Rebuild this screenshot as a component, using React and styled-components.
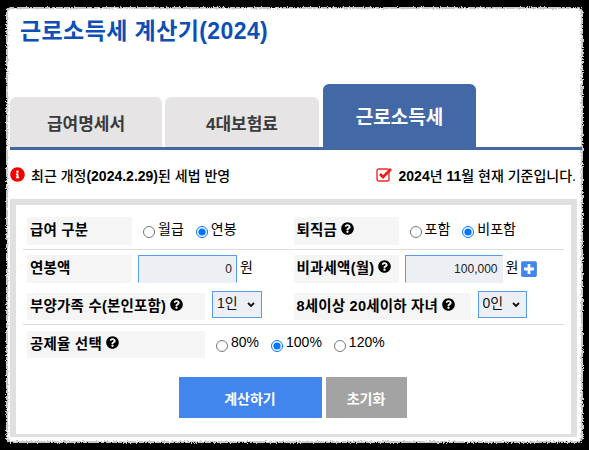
import styled, { createGlobalStyle } from 'styled-components'
import { FaQuestionCircle, FaInfoCircle, FaPlusSquare } from 'react-icons/fa'

const GlobalStyle = createGlobalStyle`
  html, body { margin: 0; padding: 0; background: #000; }
  body {
    width: 589px;
    height: 450px;
    overflow: hidden;
    font-family: "Liberation Sans", "Noto Sans CJK KR", sans-serif;
    color: #000;
  }
`

const Frame = styled.div`
  position: relative;
  width: 589px;
  height: 450px;
  padding: 8px 7px 0 10px;
  box-sizing: border-box;
  isolation: isolate;

  &::before {
    content: '';
    position: absolute;
    z-index: -1;
    left: 6px;
    top: 7px;
    width: 577px;
    height: 436px;
    background: #fff;
    border-radius: 6px;
    box-shadow: inset 0 0 0 2px #c9c9c9;
    filter: url(#rough);
  }
`

const Title = styled.h1`
  margin: 0;
  height: 76px;
  padding: 10px 0 0 10px;
  box-sizing: border-box;
  font-size: 23px;
  line-height: 26px;
  letter-spacing: 0.4px;
  font-weight: 700;
  color: #0d4fb4;
`

const TabBar = styled.div`
  display: flex;
  align-items: flex-end;
  gap: 3px;
  height: 63px;
  border-bottom: 3px solid #44699f;
`

const Tab = styled.div`
  width: ${p => p.$w}px;
  height: ${p => (p.$active ? 63 : 50)}px;
  margin-left: ${p => (p.$active ? 1 : 0)}px;
  padding-bottom: ${p => (p.$active ? 1 : 0)}px;
  box-sizing: border-box;
  display: flex;
  align-items: center;
  justify-content: center;
  border-radius: 6px 6px 0 0;
  background: ${p => (p.$active ? '#4269a6' : '#e6e4e5')};
  color: ${p => (p.$active ? '#fff' : '#3a3a3a')};
  font-size: ${p => (p.$active ? 19 : 17)}px;
  font-weight: 700;
`

const Notice = styled.div`
  display: flex;
  align-items: center;
  justify-content: space-between;
  height: 49px;
  padding-right: 6px;
  font-size: 14px;
`

const NoticeText = styled.span`
  display: flex;
  align-items: center;
  gap: 6px;
  font-weight: 500;

  b { font-weight: 700; }
`

const Panel = styled.div`
  width: 567px;
  height: 238px;
  box-sizing: border-box;
  padding: 6px 6px 3px 6px;
  background: #e0e0e0;
`

const Form = styled.div`
  height: 100%;
  box-sizing: border-box;
  padding: 12px 7px 0 7px;
  background: #fff;
`

const Row = styled.div`
  display: flex;
  box-sizing: border-box;
  height: ${p => p.$h || 28}px;
  padding: 0 4px;
  margin-bottom: ${p => p.$mb || 0}px;
  border-bottom: ${p => (p.$line ? '1px solid #dcdcdc' : 'none')};
  padding-bottom: ${p => (p.$line ? 4 : 0)}px;
`

const Field = styled.div`
  display: flex;
  align-items: center;
  width: 267px;
  gap: ${p => p.$gap || 6}px;
`

const Label = styled.div`
  display: flex;
  align-items: center;
  gap: 3px;
  align-self: stretch;
  width: ${p => p.$w}px;
  flex: none;
  box-sizing: border-box;
  padding: 0 0 5px 3px;
  background: #f5f5f5;
  font-size: 14.5px;
  font-weight: 700;
  letter-spacing: 0.2px;
  white-space: nowrap;
`

const Help = styled(FaQuestionCircle)`
  width: 13px;
  height: 13px;
  color: #000;
  margin-left: 1px;
  flex: none;
`

const Radios = styled.div`
  display: flex;
  align-items: center;
  margin-left: ${p => p.$ml || 5}px;
  gap: ${p => p.$gap || 12}px;
`

const RadioLabel = styled.label`
  display: flex;
  align-items: center;
  gap: 3px;
  padding-bottom: 6px;
  font-size: 14px;
`

const RadioInput = styled.input`
  width: 12px;
  height: 12px;
  margin: 8px 0 0;
`

const MoneyInput = styled.input`
  width: ${p => p.$w}px;
  height: 28px;
  flex: none;
  box-sizing: border-box;
  padding: 0 4px 0 0;
  border: 1px solid #5a9aee;
  border-right-color: ${p => (p.$soft ? '#eceff4' : '#5a9aee')};
  border-bottom-color: #eceff4;
  background: #eceff4;
  text-align: right;
  font: 12px "Liberation Sans", "Noto Sans CJK KR", sans-serif;
  color: #222;
  outline: none;
`

const Unit = styled.span`
  margin-left: -3px;
  padding-bottom: 7px;
  font-size: 14px;
`

const PlusIcon = styled(FaPlusSquare)`
  width: 18px;
  height: 18px;
  color: #3f86ee;
  margin-left: -4px;
`

const Select = styled.select`
  appearance: none;
  width: ${p => p.$w}px;
  height: 27px;
  flex: none;
  margin-top: -2px;
  align-self: flex-start;
  padding: 0 0 3px 4px;
  border: 1px solid #5a9aee;
  border-radius: 0;
  background: #eceff4 url("data:image/svg+xml,%3Csvg xmlns='http://www.w3.org/2000/svg' width='8' height='6'%3E%3Cpath d='M1 1l3 3 3-3' fill='none' stroke='%23111' stroke-width='1.8'/%3E%3C/svg%3E") no-repeat right 6px center;
  font: 14px "Liberation Sans", "Noto Sans CJK KR", sans-serif;
  color: #111;
  outline: none;
`

const Buttons = styled.div`
  display: flex;
  justify-content: center;
  gap: 4px;
  margin-top: 19px;
  padding-right: 2px;
`

const Button = styled.button`
  width: ${p => p.$w}px;
  height: 41px;
  border: none;
  background: ${p => p.$bg};
  color: #fff;
  font: 700 14px "Liberation Sans", "Noto Sans CJK KR", sans-serif;
`

const RoughFilter = () => (
  <svg width="0" height="0" style={{ position: 'absolute' }}>
    <filter id="rough" x="-3%" y="-3%" width="106%" height="106%">
      <feTurbulence type="fractalNoise" baseFrequency="0.7" numOctaves="2" seed="3" />
      <feDisplacementMap in="SourceGraphic" scale="4" xChannelSelector="R" yChannelSelector="G" />
    </filter>
  </svg>
)

const CheckMark = () => (
  <svg width="17" height="15" viewBox="0 0 17 15">
    <rect x="1" y="2" width="12" height="12" rx="2" fill="none" stroke="#ef2b2b" strokeWidth="1.4" />
    <path d="M4 7l3 3 8-8" fill="none" stroke="#e81f1f" strokeWidth="2.8" />
  </svg>
)

const Radio = ({ name, label, checked }) => (
  <RadioLabel>
    <RadioInput type="radio" name={name} defaultChecked={checked} />
    {label}
  </RadioLabel>
)

export default function App() {
  return (
    <Frame>
      <GlobalStyle />
      <RoughFilter />
      <Title>근로소득세 계산기(2024)</Title>
      <TabBar>
        <Tab $w={152}>급여명세서</Tab>
        <Tab $w={154}>4대보험료</Tab>
        <Tab $w={153} $active>근로소득세</Tab>
      </TabBar>
      <Notice>
        <NoticeText>
          <FaInfoCircle size={15} color="#f00000" />
          <span>최근 개정<b>(2024.2.29)</b>된 세법 반영</span>
        </NoticeText>
        <NoticeText>
          <CheckMark />
          <span><b>2024</b>년 <b>11</b>월 현재 기준입니다.</span>
        </NoticeText>
      </Notice>
      <Panel>
        <Form>
          <Row $h={33} $mb={5} $line>
            <Field>
              <Label $w={105}>급여 구분</Label>
              <Radios>
                <Radio name="pay" label="월급" />
                <Radio name="pay" label="연봉" checked />
              </Radios>
            </Field>
            <Field>
              <Label $w={105}>퇴직금<Help /></Label>
              <Radios>
                <Radio name="ret" label="포함" />
                <Radio name="ret" label="비포함" checked />
              </Radios>
            </Field>
          </Row>
          <Row $mb={10}>
            <Field>
              <Label $w={105}>연봉액</Label>
              <MoneyInput $w={99} defaultValue="0" />
              <Unit>원</Unit>
            </Field>
            <Field>
              <Label $w={105}>비과세액(월)<Help /></Label>
              <MoneyInput $w={98} $soft defaultValue="100,000" />
              <Unit>원</Unit>
              <PlusIcon />
            </Field>
          </Row>
          <Row $h={32} $mb={6} $line>
            <Field $gap={7}>
              <Label $w={178}>부양가족 수(본인포함)<Help /></Label>
              <Select $w={50} defaultValue="1"><option value="1">1인</option></Select>
            </Field>
            <Field $gap={7}>
              <Label $w={177}>8세이상 20세이하 자녀<Help /></Label>
              <Select $w={49} defaultValue="0"><option value="0">0인</option></Select>
            </Field>
          </Row>
          <Row $h={27}>
            <Field>
              <Label $w={178}>공제율 선택<Help /></Label>
              <Radios>
                <Radio name="rate" label="80%" />
                <Radio name="rate" label="100%" checked />
                <Radio name="rate" label="120%" />
              </Radios>
            </Field>
          </Row>
          <Buttons>
            <Button $w={143} $bg="#4285ec">계산하기</Button>
            <Button $w={81} $bg="#a3a3a3">초기화</Button>
          </Buttons>
        </Form>
      </Panel>
    </Frame>
  )
}
